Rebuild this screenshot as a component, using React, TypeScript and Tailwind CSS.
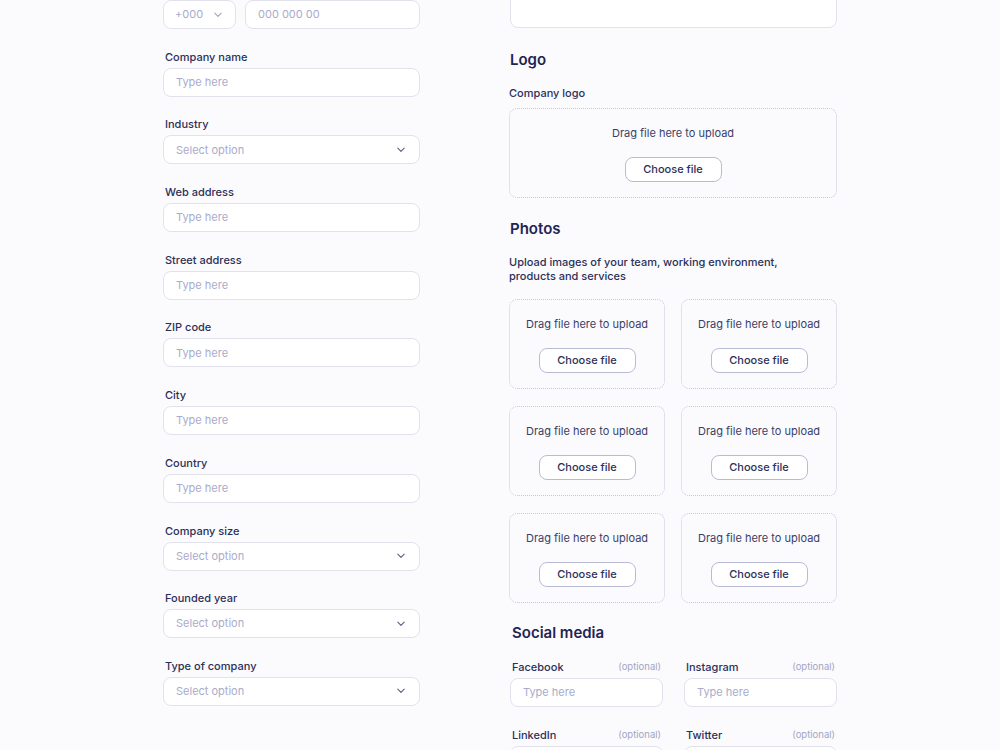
import React from "react";

const font = { fontFamily: "Inter, 'Noto Sans', sans-serif" };

function Chevron({ light }: { light?: boolean }) {
  return (
    <svg width="10" height="6" viewBox="0 0 10 6" fill="none" className="shrink-0">
      <path
        d="M1.8 1.2 L5 4.4 L8.2 1.2"
        stroke={light ? "#a3a5c4" : "#5b5f88"}
        strokeWidth="1.1"
        strokeLinecap="round"
        strokeLinejoin="round"
      />
    </svg>
  );
}

function Label({ children, optional }: { children: React.ReactNode; optional?: boolean }) {
  return (
    <div className="flex items-center justify-between h-[14px] mb-[4px] px-[2px]">
      <span className="text-[11px] leading-[14px] font-medium text-[#2c3058]">{children}</span>
      {optional && <span className="text-[9.5px] leading-[14px] text-[#a2a4c2]">(optional)</span>}
    </div>
  );
}

function TextInput({ placeholder = "Type here" }: { placeholder?: string }) {
  return (
    <div className="h-[29px] rounded-lg border border-[#e1e2ec] bg-white flex items-center px-[12px]">
      <span className="text-[11px] text-[#a9abca]">{placeholder}</span>
    </div>
  );
}

function SelectInput() {
  return (
    <div className="h-[29px] rounded-lg border border-[#e1e2ec] bg-white flex items-center justify-between pl-[12px] pr-[13px]">
      <span className="text-[11px] text-[#a9abca]">Select option</span>
      <Chevron />
    </div>
  );
}

function Field({ label, select }: { label: string; select?: boolean }) {
  return (
    <div>
      <Label>{label}</Label>
      {select ? <SelectInput /> : <TextInput />}
    </div>
  );
}

function Upload() {
  return (
    <div className="h-[90px] rounded-lg border border-dotted border-[#c6c7de] flex flex-col items-center pt-[17px]">
      <span className="text-[11px] leading-[14px] text-[#3a3e66]">Drag file here to upload</span>
      <button className="mt-[17px] h-[25px] w-[97px] rounded-lg border border-[#b9bbd6] bg-white text-[11px] font-medium text-[#2c3058]">
        Choose file
      </button>
    </div>
  );
}

function Heading({ children }: { children: React.ReactNode }) {
  return <h2 className="text-[15px] leading-[20px] font-semibold text-[#1f2452] px-[1px]">{children}</h2>;
}

export default function App() {
  return (
    <div className="h-[750px] overflow-hidden bg-[#fbfbfe]" style={font}>
      <div className="-mt-[18px] ml-[163px] w-[674px] flex gap-[89px]">
        <div className="w-[257px] flex flex-col gap-[20.7px]">
          <div>
            <Label>Phone number</Label>
            <div className="flex gap-[9px]">
              <div className="w-[73px] h-[29px] rounded-lg border border-[#e1e2ec] bg-white flex items-center justify-between pl-[11px] pr-[12px]">
                <span className="text-[11px] text-[#a9abca]">+000</span>
                <Chevron light />
              </div>
              <div className="flex-1 h-[29px] rounded-lg border border-[#e1e2ec] bg-white flex items-center px-[12px]">
                <span className="text-[11px] text-[#a9abca]">000 000 00</span>
              </div>
            </div>
          </div>
          <Field label="Company name" />
          <Field label="Industry" select />
          <Field label="Web address" />
          <Field label="Street address" />
          <Field label="ZIP code" />
          <Field label="City" />
          <Field label="Country" />
          <Field label="Company size" select />
          <Field label="Founded year" select />
          <Field label="Type of company" select />
        </div>

        <div className="w-[328px] flex flex-col">
          <div className="h-[46px] ml-[1px] rounded-lg border border-[#e1e2ec] bg-white" />
          <div className="mt-[22px]">
            <Heading>Logo</Heading>
          </div>
          <div className="mt-[16px] text-[11px] leading-[14px] font-medium text-[#2c3058]">Company logo</div>
          <div className="mt-[8px]">
            <Upload />
          </div>
          <div className="mt-[21px]">
            <Heading>Photos</Heading>
          </div>
          <p className="mt-[16px] w-[300px] text-[11px] leading-[14px] font-medium text-[#2c3058]">
            Upload images of your team, working environment, products and services
          </p>
          <div className="mt-[16px] grid grid-cols-2 gap-x-[16px] gap-y-[17px]">
            <Upload />
            <Upload />
            <Upload />
            <Upload />
            <Upload />
            <Upload />
          </div>
          <div className="mt-[20px] pl-[2px]">
            <Heading>Social media</Heading>
          </div>
          <div className="mt-[17px] pl-[1px] grid grid-cols-2 gap-x-[21px] gap-y-[20.7px]">
            <div>
              <Label optional>Facebook</Label>
              <TextInput />
            </div>
            <div>
              <Label optional>Instagram</Label>
              <TextInput />
            </div>
            <div>
              <Label optional>LinkedIn</Label>
              <TextInput />
            </div>
            <div>
              <Label optional>Twitter</Label>
              <TextInput />
            </div>
          </div>
        </div>
      </div>
    </div>
  );
}
